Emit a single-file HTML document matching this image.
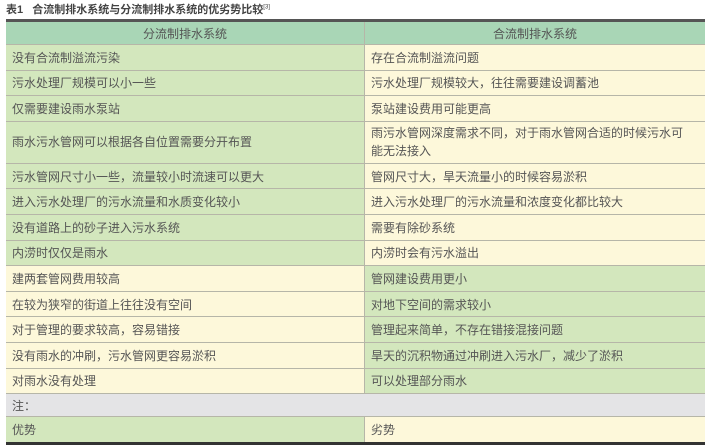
<!DOCTYPE html>
<html><head><meta charset="utf-8"><style>
body{margin:0;width:708px;height:445px;background:#fff;overflow:hidden;font-family:"Liberation Sans","Noto Sans CJK SC",sans-serif;color:#555;}
.t{position:absolute;left:6px;top:1px;font-size:11px;font-weight:bold;color:#444;}
.t sup{font-size:6px;font-weight:normal}
table{position:absolute;left:6px;top:19px;width:699px;border-collapse:collapse;border-top:3px solid #555;border-bottom:3px solid #333;font-size:12px;}
td{border:1.5px solid #b6b6a8;padding:0 6px;height:24.6px;}
td:first-child{border-left:none;width:346px}
td:last-child{border-right:none}
.h td{background:#a9d6b6;text-align:center;height:22px;}
.g{background:#d3e7bd}.y{background:#fdf8da}
.n td{background:#e4e4e6;height:22px}
.dbl td{height:41px;line-height:18px}
</style></head><body>
<div class="t">表1&nbsp;&nbsp; 合流制排水系统与分流制排水系统的优劣势比较<sup>[3]</sup></div>
<table>
<tr class="h"><td>分流制排水系统</td><td>合流制排水系统</td></tr>
<tr><td class="g">没有合流制溢流污染</td><td class="y">存在合流制溢流问题</td></tr>
<tr><td class="g">污水处理厂规模可以小一些</td><td class="y">污水处理厂规模较大，往往需要建设调蓄池</td></tr>
<tr><td class="g">仅需要建设雨水泵站</td><td class="y">泵站建设费用可能更高</td></tr>
<tr class="dbl"><td class="g">雨水污水管网可以根据各自位置需要分开布置</td><td class="y">雨污水管网深度需求不同，对于雨水管网合适的时候污水可<br>能无法接入</td></tr>
<tr><td class="g">污水管网尺寸小一些，流量较小时流速可以更大</td><td class="y">管网尺寸大，旱天流量小的时候容易淤积</td></tr>
<tr><td class="g">进入污水处理厂的污水流量和水质变化较小</td><td class="y">进入污水处理厂的污水流量和浓度变化都比较大</td></tr>
<tr><td class="g">没有道路上的砂子进入污水系统</td><td class="y">需要有除砂系统</td></tr>
<tr><td class="g">内涝时仅仅是雨水</td><td class="y">内涝时会有污水溢出</td></tr>
<tr><td class="y">建两套管网费用较高</td><td class="g">管网建设费用更小</td></tr>
<tr><td class="y">在较为狭窄的街道上往往没有空间</td><td class="g">对地下空间的需求较小</td></tr>
<tr><td class="y">对于管理的要求较高，容易错接</td><td class="g">管理起来简单，不存在错接混接问题</td></tr>
<tr><td class="y">没有雨水的冲刷，污水管网更容易淤积</td><td class="g">旱天的沉积物通过冲刷进入污水厂，减少了淤积</td></tr>
<tr><td class="y">对雨水没有处理</td><td class="g">可以处理部分雨水</td></tr>
<tr class="n"><td colspan="2">注：</td></tr>
<tr><td class="g">优势</td><td class="y">劣势</td></tr>
</table>
</body></html>
